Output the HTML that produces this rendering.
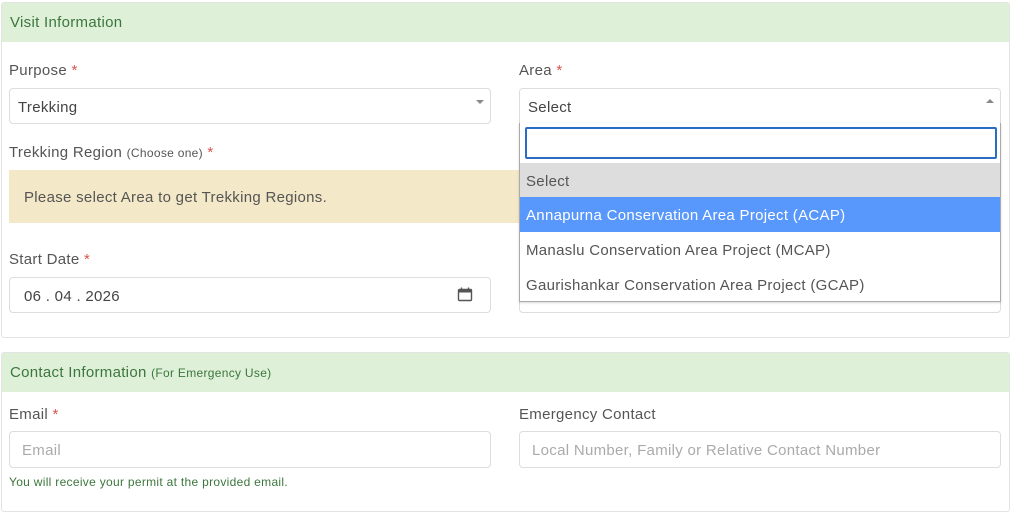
<!DOCTYPE html>
<html><head><style>
*{box-sizing:border-box;margin:0;padding:0}
body{width:1024px;height:494px;background:#fff;font-family:"Liberation Sans",sans-serif;color:#555;position:relative;overflow:hidden;letter-spacing:0.3px}
.a{position:absolute}
.panel{border:1px solid #e3e3e3;border-radius:3px}
.hd{background:#dff0d8;color:#3c763d;font-size:15px;padding-left:8px;line-height:40px}
.lbl{font-size:15px;color:#555}
.st{color:#d9534f}
.inp{border:1px solid #ddd;border-radius:4px;background:#fff;font-size:15px;color:#444;padding-left:8px}
</style></head><body>
<div class="a panel" style="left:1px;top:2px;width:1009px;height:336px"></div>
<div class="a hd" style="left:2px;top:3px;width:1007px;height:39px;line-height:40px">Visit Information</div>
<div class="a lbl" style="left:9px;top:62px">Purpose <span class="st">*</span></div>
<div class="a inp" style="left:9px;top:88px;width:482px;height:36px;line-height:37px">Trekking</div>
<div class="a" style="left:476px;top:100px;width:0;height:0;border-left:4px solid transparent;border-right:4px solid transparent;border-top:4px solid #888"></div>
<div class="a lbl" style="left:9px;top:144px">Trekking Region <span style="font-size:12px">(Choose one)</span> <span class="st">*</span></div>
<div class="a" style="left:9px;top:170px;width:512px;height:53px;background:#f3e8c8;font-size:15px;line-height:55px;padding-left:15px;color:#555">Please select Area to get Trekking Regions.</div>
<div class="a lbl" style="left:9px;top:251px">Start Date <span class="st">*</span></div>
<div class="a inp" style="left:9px;top:277px;width:482px;height:36px;line-height:37px;padding-left:14px">06 . 04 . 2026</div>
<svg class="a" style="left:457px;top:287px" width="16" height="15" viewBox="0 0 16 15"><rect x="1.5" y="2.5" width="13" height="11" rx="1" fill="none" stroke="#555" stroke-width="1.4"/><rect x="1.5" y="2.5" width="13" height="3" fill="#555"/><line x1="4.5" y1="0.5" x2="4.5" y2="3" stroke="#555" stroke-width="1.4"/><line x1="11.5" y1="0.5" x2="11.5" y2="3" stroke="#555" stroke-width="1.4"/></svg>
<div class="a lbl" style="left:519px;top:62px">Area <span class="st">*</span></div>
<div class="a inp" style="left:519px;top:277px;width:482px;height:36px"></div>
<div class="a inp" style="left:519px;top:88px;width:482px;height:36px;line-height:37px;border-radius:4px 4px 0 0">Select</div>
<div class="a" style="left:986px;top:99px;width:0;height:0;border-left:4px solid transparent;border-right:4px solid transparent;border-bottom:4px solid #888"></div>
<div class="a" style="left:519px;top:123px;width:482px;height:179px;border:1px solid #aaa;border-top:none;background:#fff;box-shadow:0 1px 2px rgba(0,0,0,.15)">
<div style="position:absolute;left:5px;top:4px;width:472px;height:32px;border:2px solid #2b6cc4;border-radius:2px"></div>
<div style="position:absolute;left:0;top:40px;width:480px;height:35px;background:#ddd;line-height:37px;padding-left:6px;font-size:15px;color:#555">Select</div>
<div style="position:absolute;left:0;top:74px;width:480px;height:35px;background:#5897fb;line-height:37px;padding-left:6px;font-size:15px;color:#fff">Annapurna Conservation Area Project (ACAP)</div>
<div style="position:absolute;left:0;top:109px;width:480px;height:35px;line-height:37px;padding-left:6px;font-size:15px;color:#555">Manaslu Conservation Area Project (MCAP)</div>
<div style="position:absolute;left:0;top:144px;width:480px;height:35px;line-height:37px;padding-left:6px;font-size:15px;color:#555">Gaurishankar Conservation Area Project (GCAP)</div>
</div>
<div class="a panel" style="left:1px;top:352px;width:1009px;height:160px"></div>
<div class="a hd" style="left:2px;top:353px;width:1007px;height:39px;line-height:40px">Contact Information <span style="font-size:12px">(For Emergency Use)</span></div>
<div class="a lbl" style="left:9px;top:406px">Email <span class="st">*</span></div>
<div class="a lbl" style="left:519px;top:406px">Emergency Contact</div>
<div class="a inp" style="left:9px;top:431px;width:482px;height:37px;line-height:38px;padding-left:12px;color:#aaa">Email</div>
<div class="a inp" style="left:519px;top:431px;width:482px;height:37px;line-height:38px;padding-left:12px;color:#aaa">Local Number, Family or Relative Contact Number</div>
<div class="a" style="left:9px;top:475px;font-size:12px;color:#3c763d">You will receive your permit at the provided email.</div>
</body></html>
